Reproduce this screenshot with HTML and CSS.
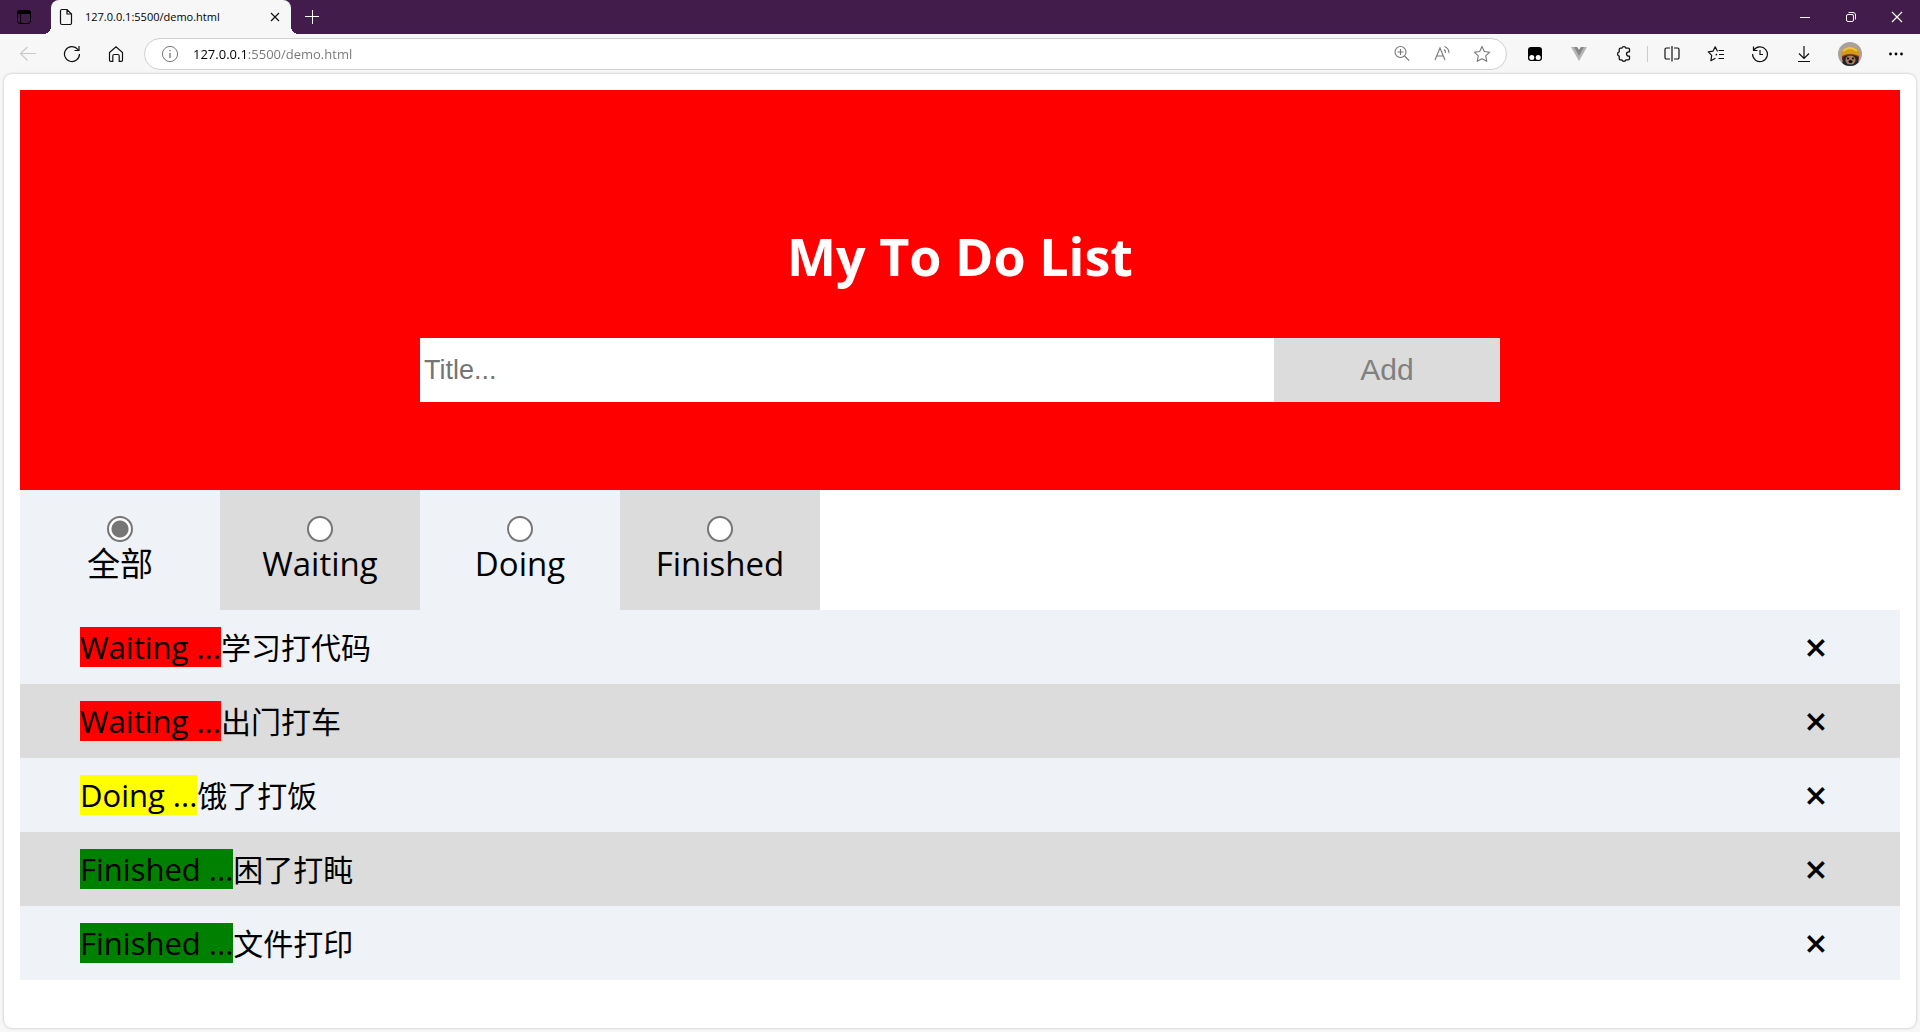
FILE: index.html
```html
<!DOCTYPE html>
<html lang="zh-CN">
<head>
<meta charset="utf-8">
<meta name="viewport" content="width=device-width, initial-scale=1">
<title>127.0.0.1:5500/demo.html</title>
<link rel="stylesheet" href="styles.css">
</head>
<body>
<header class="titlebar">
  <button class="workspace" aria-label="Tab actions">
    <svg width="16" height="16" viewBox="0 0 16 16"><rect x="1.5" y="1.5" width="13" height="13" rx="2.5" fill="none" stroke="#000"/><path d="M1 4a3 3 0 0 1 3-3h8a3 3 0 0 1 3 3v1H1z"/><path d="M4.5 5v9.5" stroke="#000"/></svg>
  </button>
  <div class="browser-tab">
    <svg class="doc" width="14" height="18" viewBox="0 0 14 18" fill="none" stroke="#111" stroke-width="1.2"><path d="M3 1.5h5L12.5 6v9a1.5 1.5 0 0 1-1.5 1.500H3A1.500 1.500 0 0 1 1.500 15V3A1.500 1.500 0 0 1 3 1.500zM8 1.500V6h4.500"/></svg>
    <span class="tab-title">127.0.0.1:5500/demo.html</span>
    <button class="tab-close" aria-label="Close tab"><svg width="10" height="10" viewBox="0 0 10 10" stroke="#111" stroke-width="1.2"><path d="M1 1l8 8M9 1L1 9"/></svg></button>
  </div>
  <button class="new-tab" aria-label="New tab"><svg width="14" height="14" viewBox="0 0 14 14" stroke="#fff"><path d="M7.500 0v14M0 6.500h14"/></svg></button>
  <div class="window-buttons">
    <button aria-label="Minimize"><svg width="12" height="12" viewBox="0 0 12 12" stroke="#fff"><path d="M1 6.500h10"/></svg></button>
    <button aria-label="Restore"><svg width="12" height="12" viewBox="0 0 12 12" fill="none" stroke="#fff"><rect x="1.500" y="3.500" width="7" height="7" rx="1.500"/><path d="M3.500 1.500H8A2.500 2.500 0 0 1 10.500 4v4.500"/></svg></button>
    <button aria-label="Close"><svg width="12" height="12" viewBox="0 0 12 12" stroke="#fff" stroke-width="1.200"><path d="M1 1l10 10M11 1L1 11"/></svg></button>
  </div>
</header>
<nav class="toolbar">
  <button class="tool" aria-label="Back"><svg width="18" height="18" viewBox="0 0 18 18" fill="none" stroke="#c8c8c8" stroke-width="1.100"><path d="M17 8.500H1.500M8.500 2L1.500 8.500l7 7"/></svg></button>
  <button class="tool" aria-label="Refresh"><svg width="18" height="18" viewBox="0 0 18 18" fill="none" stroke="#111" stroke-width="1.200"><path d="M16.500 9A7.500 7.500 0 1 1 14.800 4.300L16 5.500M16 1v4.500h-4.500"/></svg></button>
  <button class="tool" aria-label="Home"><svg width="18" height="18" viewBox="0 0 18 18" fill="none" stroke="#111" stroke-width="1.200"><path d="M2.500 7.500L9 1.700l6.500 5.800v7.700a1.200 1.200 0 0 1-1.200 1.200h-2.100V11a1.500 1.500 0 0 0-1.500-1.500H7.300A1.500 1.500 0 0 0 5.800 11v5.400H3.700a1.200 1.200 0 0 1-1.200-1.200z"/></svg></button>
  <div class="address">
    <svg class="info" width="18" height="18" viewBox="0 0 18 18" fill="none" stroke="#767676"><circle cx="9" cy="9" r="7.600"/><path d="M9 8v5M9 5v1.300" stroke-width="1.300"/></svg>
    <input class="url" type="text" aria-label="Address" value="127.0.0.1:5500/demo.html">
    <button aria-label="Zoom"><svg width="18" height="18" viewBox="0 0 18 18" fill="none" stroke="#767676" stroke-width="1.100"><circle cx="7.500" cy="7" r="5.500"/><path d="M11.500 11l4.700 4.700M7.500 4v6M4.500 7h6"/></svg></button>
    <button aria-label="Read aloud"><svg width="18" height="18" viewBox="0 0 18 18" fill="none" stroke="#767676" stroke-width="1.100"><path d="M2 15L7 3l5 12M3.800 11h6.400M11 4.500q1.700 1 1.500 3.500M11.500 1.500q4.500 1.800 4.500 6.500"/></svg></button>
    <button aria-label="Add to favorites"><svg width="18" height="18" viewBox="0 0 18 18" fill="none" stroke="#767676" stroke-width="1.100" stroke-linejoin="round"><path d="M9 1.500l2.300 5 5.400.7-4 3.700 1.100 5.400L9 13.700l-4.800 2.600 1.100-5.400-4-3.700 5.400-.7z"/></svg></button>
  </div>
  <button class="tool" aria-label="Extension"><svg width="16" height="16" viewBox="0 0 16 16"><rect x="1" y="1" width="14" height="14" rx="3"/><circle cx="4.800" cy="11.500" r="2.500" fill="#fff"/><circle cx="11.200" cy="11.500" r="2.500" fill="#fff"/></svg></button>
  <button class="tool" aria-label="Vue devtools"><svg width="16" height="16" viewBox="0 0 16 16"><path d="M0 1h6l2 3 2-3h6L8 15z" fill="#b4b4b4"/><path d="M3 1h3l2 3 2-3h3L8 9.800z" fill="#858585"/></svg></button>
  <button class="tool" aria-label="Extensions"><svg width="18" height="18" viewBox="0 0 18 18" fill="none" stroke="#111" stroke-width="1.300" stroke-linejoin="round"><path d="M6.500 3.200h1.300a2.200 2.200 0 0 1 4.200 0h2.200a1.300 1.300 0 0 1 1.300 1.300v2.300h-.8a2.200 2.200 0 0 0 0 4.400h.8v2.300a1.300 1.300 0 0 1-1.300 1.300H12a2.200 2.200 0 0 1-4.200 0H6.500a1.300 1.300 0 0 1-1.300-1.300v-2.300a2.300 2.300 0 0 1 0-4.400V4.500a1.300 1.300 0 0 1 1.300-1.300z"/></svg></button>
  <span class="divider"></span>
  <button class="tool" aria-label="Split screen"><svg width="18" height="18" viewBox="0 0 18 18" fill="none" stroke="#111" stroke-width="1.200"><path d="M7 3H3.500A1.500 1.500 0 0 0 2 4.500v8A1.500 1.500 0 0 0 3.500 14H7M11 3h3.500A1.500 1.500 0 0 1 16 4.500v8a1.500 1.500 0 0 1-1.500 1.500H11M9 1v15.500"/></svg></button>
  <button class="tool" aria-label="Favorites"><svg width="18" height="18" viewBox="0 0 18 18" fill="none" stroke="#111" stroke-width="1.200" stroke-linejoin="round"><path d="M11.500 5.500H17M12 9.500h5M11.500 13.500H17M10.300 6L8.200 1.800 6.100 6.100l-4.800.8 3.400 3.500-.8 5.300L8.400 13.300M10.300 6l.5.300M10 9l-1.300 1.200"/></svg></button>
  <button class="tool" aria-label="History"><svg width="18" height="18" viewBox="0 0 18 18" fill="none" stroke="#111" stroke-width="1.200"><path d="M2.500 1.500V5.500h4M2.600 5.500A7.400 7.400 0 1 1 1.600 9M9 5v4.500h3"/></svg></button>
  <button class="tool" aria-label="Downloads"><svg width="18" height="18" viewBox="0 0 18 18" fill="none" stroke="#111" stroke-width="1.200"><path d="M9 1v12.500M4 8.500l5 5 5-5M3 16.500h12"/></svg></button>
  <button class="tool profile" aria-label="Profile"><svg width="24" height="24" viewBox="0 0 24 24"><defs><clipPath id="face"><circle cx="12" cy="12" r="12"/></clipPath></defs><g clip-path="url(#face)"><path fill="#aaa199" d="M0 0h24v24H0z"/><ellipse cx="12.500" cy="13" rx="9.500" ry="8" fill="#d29a16"/><path d="M5 9q7-6 14 0" stroke="#efc43b" stroke-width="2" fill="none"/><path d="M4 14q8-4 17 0v4H4z" fill="#8e2c1e"/><path d="M5 15q8-4 15 0l1 9H4z" fill="#202630"/><ellipse cx="12.500" cy="18" rx="5" ry="4.500" fill="#a97b50"/><circle cx="10" cy="16.500" r="1"/><circle cx="15" cy="16.500" r="1"/><ellipse cx="12.500" cy="19.500" rx="2" ry="1.500"/></g></svg></button>
  <button class="tool" aria-label="More"><svg width="16" height="16" viewBox="0 0 16 16"><circle cx="2.500" cy="8" r="1.400"/><circle cx="8" cy="8" r="1.400"/><circle cx="13.500" cy="8" r="1.400"/></svg></button>
</nav>
<main class="page">
  <form class="hero">
    <h1>My To Do List</h1>
    <div class="entry">
      <input type="text" placeholder="Title..." aria-label="Title">
      <button type="button">Add</button>
    </div>
  </form>
  <div class="filters">
    <label><input type="radio" name="filter" checked><span>全部</span></label>
    <label><input type="radio" name="filter"><span>Waiting</span></label>
    <label><input type="radio" name="filter"><span>Doing</span></label>
    <label><input type="radio" name="filter"><span>Finished</span></label>
  </div>
  <ul class="todos">
    <li><span class="status waiting">Waiting ...</span><span class="task">学习打代码</span><button aria-label="Delete">×</button></li>
    <li><span class="status waiting">Waiting ...</span><span class="task">出门打车</span><button aria-label="Delete">×</button></li>
    <li><span class="status doing">Doing ...</span><span class="task">饿了打饭</span><button aria-label="Delete">×</button></li>
    <li><span class="status finished">Finished ...</span><span class="task">困了打盹</span><button aria-label="Delete">×</button></li>
    <li><span class="status finished">Finished ...</span><span class="task">文件打印</span><button aria-label="Delete">×</button></li>
  </ul>
</main>
</body>
</html>
```

FILE: styles.css
```css
* {
  box-sizing: border-box;
}

body {
  margin: 0;
  min-height: 100vh;
  display: flex;
  flex-direction: column;
  background: #f7f7f7;
  color: #000;
  font-family: "Open Sans", "Noto Sans CJK SC", sans-serif;
}

button {
  padding: 0;
  border: 0;
  background: none;
  color: inherit;
  font-family: inherit;
  display: grid;
  place-items: center;
}

svg {
  display: block;
  flex: none;
}

/* Window title bar */
.titlebar {
  display: flex;
  height: 34px;
  background: #421d4c;
}

.workspace {
  width: 48px;
  margin-right: 3px;
}

.browser-tab {
  position: relative;
  display: flex;
  align-items: center;
  width: 240px;
  padding: 0 8px;
  background: #f7f7f7;
  border-radius: 8px 8px 0 0;
}

.browser-tab::before,
.browser-tab::after {
  content: "";
  position: absolute;
  bottom: 0;
  width: 8px;
  height: 8px;
}

.browser-tab::before {
  right: 100%;
  background: radial-gradient(circle at 0 0, transparent 8px, #f7f7f7 8px);
}

.browser-tab::after {
  left: 100%;
  background: radial-gradient(circle at 100% 0, transparent 8px, #f7f7f7 8px);
}

.tab-title {
  flex: 1;
  margin-left: 12px;
  font-size: 11px;
  line-height: 16px;
}

.tab-close {
  width: 16px;
  height: 16px;
}

.new-tab {
  width: 42px;
}

.window-buttons {
  display: flex;
  margin-left: auto;
}

.window-buttons button {
  width: 46px;
}

/* Browser toolbar */
.toolbar {
  display: flex;
  align-items: center;
  height: 40px;
  padding: 0 2px 0 6px;
}

.tool {
  flex: none;
  width: 44px;
  height: 32px;
}

.profile {
  width: 48px;
}

.divider {
  width: 1px;
  height: 16px;
  margin: 0 2px;
  background: #ccc;
}

.address {
  flex: 1;
  display: flex;
  align-items: center;
  height: 32px;
  margin: 0 6px;
  padding: 0 4px 0 16px;
  background: #fff;
  border: 1px solid #d0d0d0;
  border-radius: 16px;
}

.address button {
  width: 40px;
  height: 30px;
}

.url {
  flex: 1;
  min-width: 0;
  margin-left: 14px;
  padding: 0;
  border: 0;
  outline: 0;
  font: 13px/20px "Open Sans", sans-serif;
  color: #767676;
  background: linear-gradient(90deg, #000 53px, #767676 53px);
  -webkit-background-clip: text;
  background-clip: text;
  -webkit-text-fill-color: transparent;
}

/* Page */
.page {
  flex: 1;
  margin: 0 4px 4px;
  padding: 16px;
  background: #fff;
  border-radius: 8px;
  box-shadow: 0 0 3px rgba(0, 0, 0, 0.25);
}

.hero {
  display: flex;
  flex-direction: column;
  align-items: center;
  height: 400px;
  padding-top: 128px;
  background: #f00;
}

h1 {
  margin: 0 0 44px;
  color: #fff;
  font-size: 52px;
  line-height: 76px;
}

.entry {
  display: flex;
  width: 1080px;
  max-width: 100%;
  height: 64px;
}

.entry input {
  flex: 1;
  min-width: 0;
  padding: 0 4px;
  border: 0;
  font: 27px "Liberation Sans", sans-serif;
}

.entry input::placeholder {
  color: #757575;
}

.entry button {
  width: 226px;
  background: #dcdcdc;
  color: #808080;
  font: 30px "Liberation Sans", sans-serif;
}

.filters {
  display: flex;
}

.filters label {
  display: flex;
  flex-direction: column;
  align-items: center;
  width: 200px;
  height: 120px;
  padding-top: 26px;
  background: #eff3f8;
  font-size: 33px;
  line-height: 44px;
}

.filters label:nth-child(even) {
  background: #dcdcdc;
}

.filters input {
  appearance: none;
  flex: none;
  width: 26px;
  height: 26px;
  margin: 0;
  background: #fff;
  border: 2px solid #767676;
  border-radius: 50%;
}

.filters input:checked {
  background: radial-gradient(circle, #767676 8px, #fff 9px);
}

.todos {
  margin: 0;
  padding: 0;
  list-style: none;
}

.todos li {
  display: flex;
  align-items: center;
  height: 74px;
  padding: 0 60px;
  background: #eff3f8;
  font-size: 30px;
  line-height: 40px;
}

.todos li:nth-child(even) {
  background: #dcdcdc;
}

.status {
  font-size: 31px;
}

.task {
  padding-top: 2px;
}

.waiting {
  background: #f00;
}

.doing {
  background: #ff0;
}

.finished {
  background: #008000;
}

.todos button {
  width: 48px;
  height: 40px;
  margin-left: auto;
  font-size: 40px;
  font-weight: 600;
  line-height: 36px;
}
```
